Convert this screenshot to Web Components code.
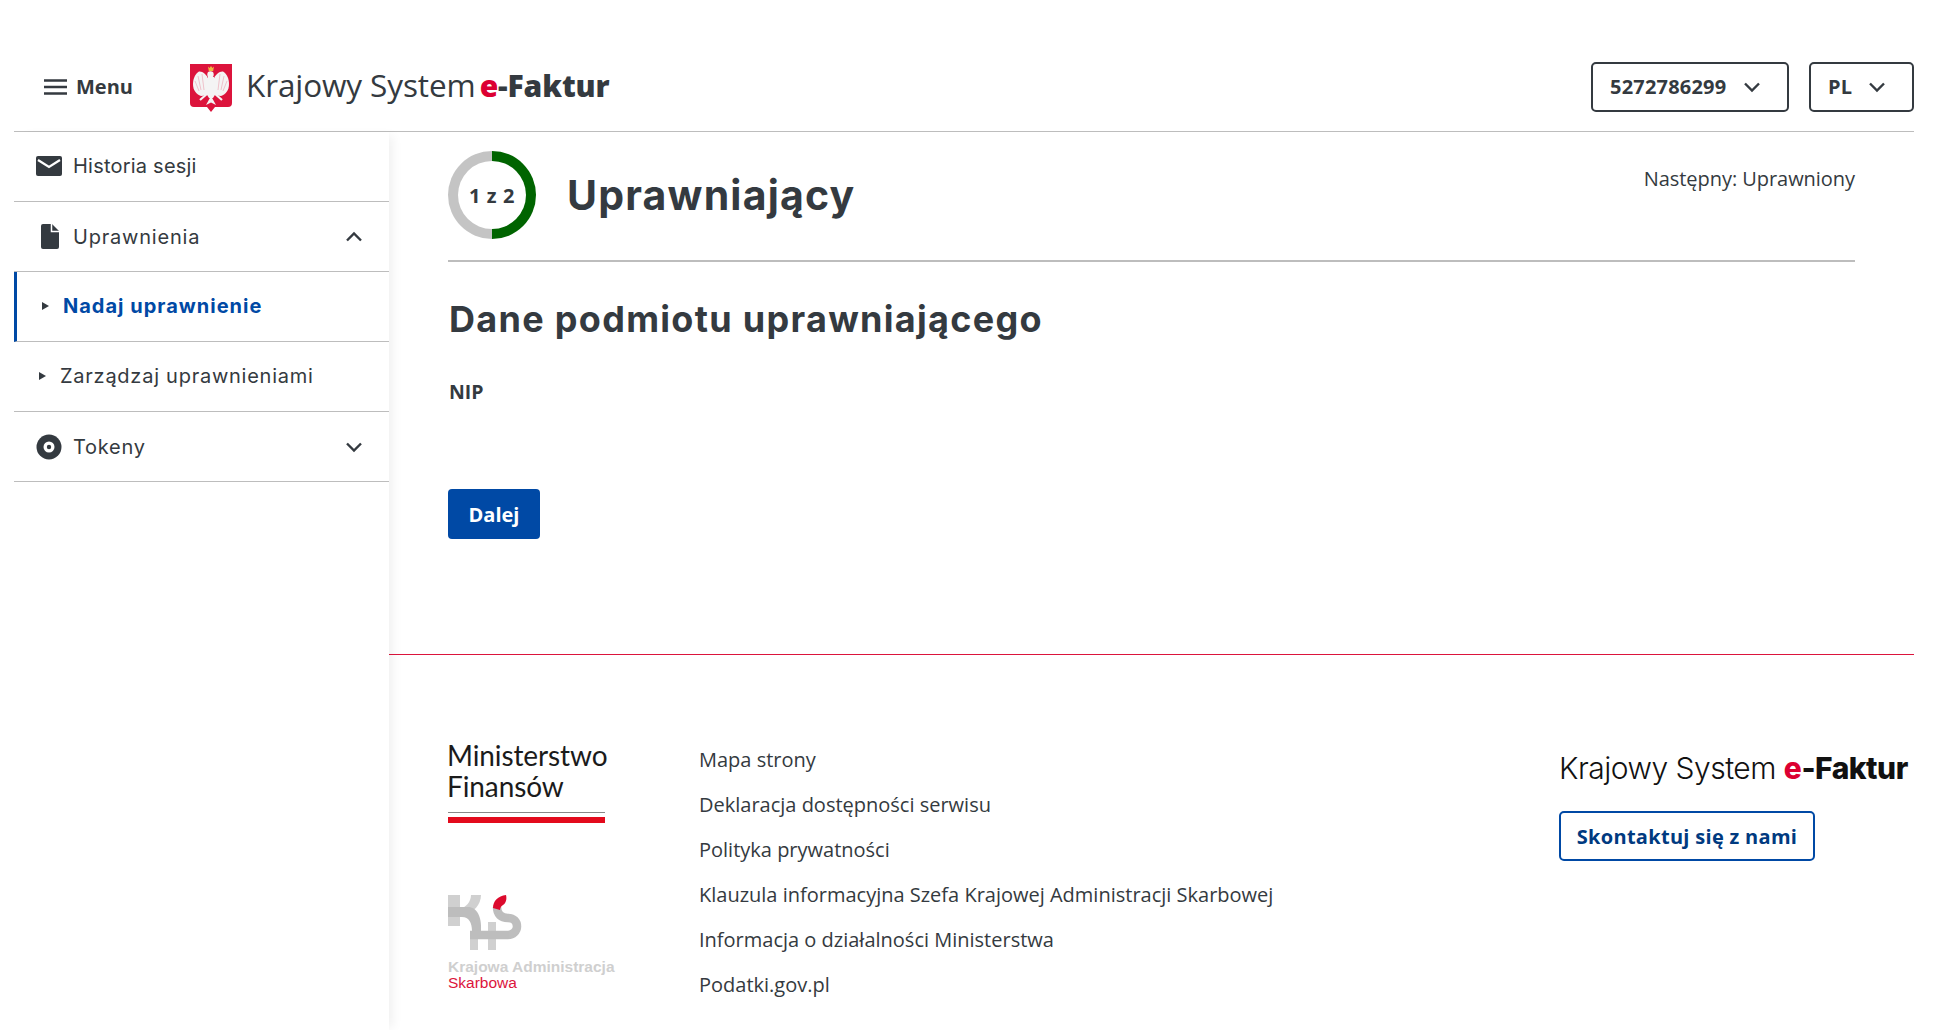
<!DOCTYPE html>
<html lang="pl">
<head>
<meta charset="utf-8">
<title>Krajowy System e-Faktur</title>
<style>
  html, body { margin: 0; padding: 0; background: #fff; }
  body { font-family: "Open Sans", sans-serif; color: #343a40; height: 1030px; overflow: hidden; }
</style>
</head>
<body>
<ksef-app></ksef-app>
<script>
'use strict'
const CHEVRON_DOWN = `<svg width="24" height="24" viewBox="0 0 24 24" fill="none" stroke="#343a40" stroke-width="2.4"><path d="M5 8.500l7 7 7-7"/></svg>`
const CHEVRON_UP = `<svg width="24" height="24" viewBox="0 0 24 24" fill="none" stroke="#343a40" stroke-width="2.4"><path d="M5 15.500l7-7 7 7"/></svg>`

class KsefApp extends HTMLElement {
    constructor () {
        super()
        this.attachShadow({mode:'open'})
        this.shadowRoot.innerHTML = `
        <style>
            :host{ display:block; padding:0 22px 0 14px; }
            .body{ display:flex; align-items:stretch; }
            .content{ flex:1; min-width:0; }
        </style>
        <ksef-header></ksef-header>
        <div class="body">
            <ksef-sidebar></ksef-sidebar>
            <div class="content">
                <step-page></step-page>
                <ksef-footer></ksef-footer>
            </div>
        </div>`
    }
}

class KsefHeader extends HTMLElement {
    constructor () {
        super()
        this.attachShadow({mode:'open'})
        this.shadowRoot.innerHTML = `
        <style>
            :host{ display:flex; align-items:center; height:132px; box-sizing:border-box; padding-top:42px; border-bottom:1px solid #bdbdbd; color:#343a40; font-family:"Open Sans",sans-serif; }
            .menu{ display:flex; align-items:center; gap:8px; margin-left:30px; font-size:20px; font-weight:700; }
            .brand{ display:flex; align-items:center; margin-left:57px; }
            polish-eagle{ margin-top:2px; }
            .name{ font-size:31.500px; line-height:40px; margin:-2px 0 0 14px; letter-spacing:-.1px; }
            .name b{ margin-left:4px; font-size:30px; font-weight:800; }
            .name i{ font-style:normal; color:#dc0032; }
            .right{ margin-left:auto; display:flex; gap:20px; }
        </style>
        <div class="menu">
            <svg width="24" height="24" viewBox="0 0 24 24" stroke="#343a40" stroke-width="2.4"><path d="M0 5.500h23M0 12h23M0 18.500h23"/></svg>
            <span>Menu</span>
        </div>
        <div class="brand">
            <polish-eagle></polish-eagle>
            <span class="name">Krajowy System<b><i>e</i>-Faktur</b></span>
        </div>
        <div class="right">
            <drop-box style="--w:198px">5272786299</drop-box>
            <drop-box style="--w:105px">PL</drop-box>
        </div>`
    }
}

class PolishEagle extends HTMLElement {
    constructor () {
        super()
        this.attachShadow({mode:'open'})
        this.shadowRoot.innerHTML = `
        <style>:host{ display:block; width:42px; height:50px; } svg{ display:block; }</style>
        <svg width="42" height="50" viewBox="0 0 42 50">
            <path d="M0 1h42v39q0 4-4 4H25l-4 5-4-5H4q-4 0-4-4z" fill="#dc143c"/>
            <g fill="#f4f4f4">
                <path d="M18.500 17C17 11 12 8 9 8.500 5 11 3 16 3 21c0 6 3 10 8 12 3 0 5-1 7-3l1-8z"/>
                <path d="M23.500 17C25 11 30 8 33 8.500 37 11 39 16 39 21c0 6-3 10-8 12-3 0-5-1-7-3l-1-8z"/>
                <path d="M18 14h6l1.500 17-2.500 4h-4l-2.500-4z"/>
                <circle cx="20.500" cy="11.500" r="3.200"/>
                <path d="M21 33l-5 9 5-2.500 5 2.500z"/>
            </g>
            <path d="M18 30l-8 7M24 30l8 7" stroke="#f4f4f4" stroke-width="2.200" fill="none"/>
            <path d="M8 13l3 14M5 18l4 10M12 11l2 16M34 13l-3 14M37 18l-4 10M30 11l-2 16" stroke="#dc143c" stroke-width=".5" opacity=".45" fill="none"/>
            <path d="M18 3.500l1.500 1.500 1.500-2 1.500 2 1.500-1.500-.8 4.500h-4.400z" fill="#eeb844"/>
        </svg>`
    }
}

class DropBox extends HTMLElement {
    constructor () {
        super()
        this.attachShadow({mode:'open'})
        this.shadowRoot.innerHTML = `
        <style>
            :host{ display:flex; align-items:center; width:var(--w); height:50px; box-sizing:border-box; padding-left:17px; border:2px solid #343a40; border-radius:5px; font-size:20px; font-weight:700; color:#343a40; letter-spacing:.2px; }
            svg{ margin-left:auto; margin-right:23px; }
        </style>
        <slot></slot>${CHEVRON_DOWN}`
    }
}

class KsefSidebar extends HTMLElement {
    constructor () {
        super()
        this.attachShadow({mode:'open'})
        this.shadowRoot.innerHTML = `
        <style>
            :host{ display:block; width:375px; flex:none; box-shadow:8px 0 10px -4px rgba(0,0,0,.06); height:900px; position:relative; z-index:1; }
            span[slot]{ display:flex; }
        </style>
        <nav-row style="--ls:.22px;--pb:2px">
            <svg slot="icon" width="26" height="20" viewBox="0 0 26 20"><rect width="26" height="20" rx="2" fill="#343a40"/><path d="M2 4l11 7 11-7" fill="none" stroke="#fff" stroke-width="2.2"/></svg>
            Historia sesji
        </nav-row>
        <nav-row style="--ls:.8px">
            <svg slot="icon" width="26" height="25" viewBox="0 0 26 25"><path d="M5 2q0-2 2-2h9l7 7v16q0 2-2 2H7q-2 0-2-2z" fill="#343a40"/><path d="M15.500 0v7.500H23" fill="none" stroke="#fff" stroke-width="1.500"/></svg>
            Uprawnienia
            <span slot="end">${CHEVRON_UP}</span>
        </nav-row>
        <nav-sub active style="--ls:1px">Nadaj uprawnienie</nav-sub>
        <nav-sub style="--ls:.75px">Zarządzaj uprawnieniami</nav-sub>
        <nav-row style="--ls:.75px">
            <svg slot="icon" width="26" height="26" viewBox="0 0 26 26"><circle cx="13" cy="13" r="12.500" fill="#343a40"/><circle cx="13" cy="13" r="5.500" fill="#fff"/><circle cx="13" cy="13" r="2.200" fill="#343a40"/></svg>
            Tokeny
            <span slot="end">${CHEVRON_DOWN}</span>
        </nav-row>`
    }
}

class NavRow extends HTMLElement {
    constructor () {
        super()
        this.attachShadow({mode:'open'})
        this.shadowRoot.innerHTML = `
        <style>
            :host{ display:flex; align-items:center; height:70px; box-sizing:border-box; border-bottom:1px solid #bdbdbd; padding:0 22px var(--pb,0); font-family:Inter,sans-serif; font-size:20px; color:#343a40; letter-spacing:var(--ls,.15px); }
            .icon{ width:26px; display:flex; justify-content:center; margin-right:11px; flex:none; }
            .end{ margin-left:auto; display:flex; margin-right:1px; }
        </style>
        <span class="icon"><slot name="icon"></slot></span>
        <span><slot></slot></span>
        <span class="end"><slot name="end"></slot></span>`
    }
}

class NavSub extends HTMLElement {
    constructor () {
        super()
        this.attachShadow({mode:'open'})
        this.shadowRoot.innerHTML = `
        <style>
            :host{ display:flex; align-items:center; height:70px; box-sizing:border-box; border-bottom:1px solid #bdbdbd; padding:0 0 2px 25px; font-family:Inter,sans-serif; font-size:20px; color:#343a40; letter-spacing:var(--ls,.15px); }
            :host([active]){ border-left:3px solid #0049a5; padding-left:25px; font-weight:700; color:#0049a5; }
            .tri{ width:0; height:0; border-left:7px solid #343a40; border-top:4px solid transparent; border-bottom:4px solid transparent; margin-right:14px; }
        </style>
        <span class="tri"></span><slot></slot>`
    }
}

class StepPage extends HTMLElement {
    constructor () {
        super()
        this.attachShadow({mode:'open'})
        this.shadowRoot.innerHTML = `
        <style>
            :host{ display:block; height:523px; box-sizing:border-box; padding:0 59px; border-bottom:1px solid #dc143c; color:#343a40; font-family:"Open Sans",sans-serif; }
            .top{ display:flex; align-items:center; height:130px; box-sizing:border-box; border-bottom:2px solid #bdbdbd; }
            .ring{ width:88px; height:88px; border-radius:50%; background:conic-gradient(#006400 0 50%,#c4c4c4 50% 100%); display:flex; align-items:center; justify-content:center; margin-top:-2px; }
            .ring span{ width:68px; height:68px; border-radius:50%; background:#fff; display:flex; align-items:center; justify-content:center; font-size:20px; font-weight:700; letter-spacing:.6px; }
            h1{ margin:-2px 0 0 31px; font-family:Inter,sans-serif; font-size:41px; font-weight:700; letter-spacing:1.2px; }
            .next{ margin-left:auto; align-self:flex-start; margin-top:33px; font-size:20px; letter-spacing:-.05px; }
            h2{ margin:35px 0 0 1px; font-family:Inter,sans-serif; font-size:36px; line-height:44px; font-weight:700; letter-spacing:1.3px; }
            label{ display:block; margin:37px 0 0 1px; font-size:19.500px; font-weight:700; line-height:28px; }
            button{ display:block; margin-top:83px; width:92px; height:50px; border:0; border-radius:4px; background:#0049a5; color:#fff; font:700 20px "Open Sans",sans-serif; }
        </style>
        <div class="top">
            <div class="ring"><span>1 z 2</span></div>
            <h1>Uprawniający</h1>
            <div class="next">Następny: Uprawniony</div>
        </div>
        <h2>Dane podmiotu uprawniającego</h2>
        <label>NIP</label>
        <button>Dalej</button>`
    }
}

class KsefFooter extends HTMLElement {
    constructor () {
        super()
        this.attachShadow({mode:'open'})
        this.shadowRoot.innerHTML = `
        <style>
            :host{ display:flex; padding:85px 0 0 58px; color:#343a40; font-family:"Open Sans",sans-serif; }
            .logos{ width:252px; flex:none; }
            .mf{ font-family:Lato,sans-serif; font-size:28px; line-height:31px; color:#1b1b1b; letter-spacing:-.1px; }
            .mf i{ display:block; width:157px; height:1px; background:#888; margin:10px 0 0 1px; }
            .mf u{ display:block; width:157px; height:6px; background:#e30a1c; margin:4px 0 0 1px; }
            .kas{ margin-top:72px; margin-left:1px; }
            .kas svg{ display:block; }
            .kas p{ margin:9px 0 0; font:700 15.500px/16px "Liberation Sans",sans-serif; color:#cfcfcf; white-space:nowrap; }
            .kas p + p{ margin:0; font-weight:400; color:#dc143c; }
            ul{ list-style:none; margin:5px 0 0; padding:0; flex:1; }
            li{ height:45px; font-size:20px; line-height:30px; }
            .side{ width:355px; flex:none; }
            .nm{ font-family:Inter,sans-serif; font-weight:300; font-size:30px; color:#111; line-height:40px; white-space:nowrap; margin-top:8px; letter-spacing:-.5px; }
            .nm b{ font-weight:800; }
            .nm i{ font-style:normal; color:#dc0032; }
            a{ display:inline-flex; align-items:center; justify-content:center; margin-top:23px; width:256px; height:50px; box-sizing:border-box; border:2px solid #0049a5; border-radius:5px; color:#003a80; font-size:20px; font-weight:700; letter-spacing:.3px; }
        </style>
        <div class="logos">
            <div class="mf">Ministerstwo<br>Finansów<i></i><u></u></div>
            <div class="kas">
                <svg width="74" height="55" viewBox="0 0 74 55">
                    <g opacity=".55">
                        <rect width="12" height="31" fill="#aaa"/>
                        <path d="M23 0h10c0 10-8 17-15 20l-6-6c6-2 11-7 11-14z" fill="#aaa"/>
                        <path d="M0 12h20c9 0 14 10 13 24h-9c0-8-3-14-10-14H0z" fill="#888"/>
                        <rect x="22" y="36" width="8" height="19" fill="#aaa"/>
                        <rect x="40" y="27" width="8" height="28" fill="#aaa"/>
                        <path d="M49 12C49 19 53 23 60 23 66 23 69 27 69 31.500 69 36 65 40 60 40H22" fill="none" stroke="#888" stroke-width="8.500"/>
                    </g>
                    <path d="M58 0C50 1 45 6 45 13l7 2c0-2 1-4 3-5 3-2 4-6 3-10z" fill="#dc0a2d"/>
                </svg>
                <p>Krajowa Administracja</p>
                <p>Skarbowa</p>
            </div>
        </div>
        <ul>
            <li>Mapa strony</li>
            <li>Deklaracja dostępności serwisu</li>
            <li>Polityka prywatności</li>
            <li>Klauzula informacyjna Szefa Krajowej Administracji Skarbowej</li>
            <li>Informacja o działalności Ministerstwa</li>
            <li>Podatki.gov.pl</li>
        </ul>
        <div class="side">
            <div class="nm">Krajowy System <b><i>e</i>-Faktur</b></div>
            <a>Skontaktuj się z nami</a>
        </div>`
    }
}

window.customElements.define('ksef-app',KsefApp)
window.customElements.define('ksef-header',KsefHeader)
window.customElements.define('polish-eagle',PolishEagle)
window.customElements.define('drop-box',DropBox)
window.customElements.define('ksef-sidebar',KsefSidebar)
window.customElements.define('nav-row',NavRow)
window.customElements.define('nav-sub',NavSub)
window.customElements.define('step-page',StepPage)
window.customElements.define('ksef-footer',KsefFooter)
</script>
</body>
</html>
